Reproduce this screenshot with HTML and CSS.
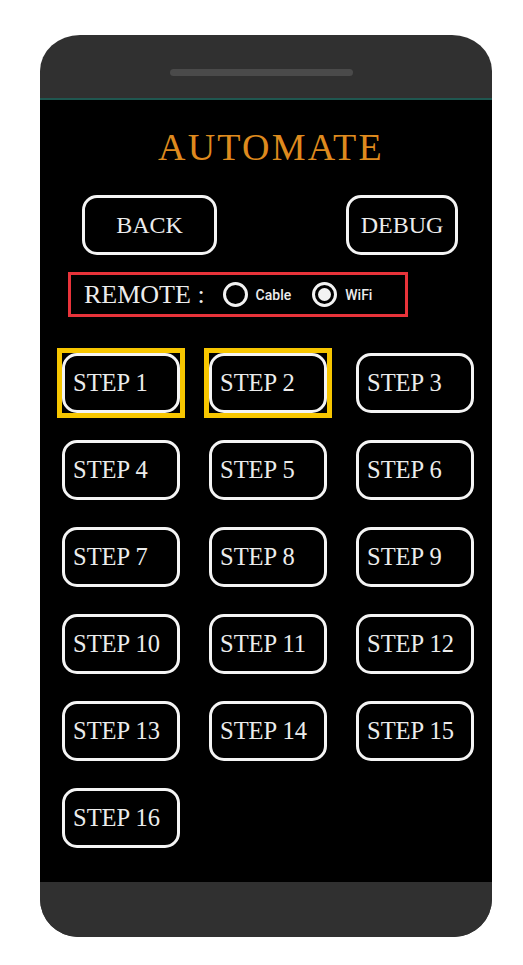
FILE: index.html
```
<!DOCTYPE html>
<html>
<head>
<meta charset="utf-8">
<link rel="stylesheet" href="styles.css">
</head>
<body>
<div class="phone">
  <div class="phone-top"><div class="speaker"></div></div>
  <div class="screen">
    <h1 class="title">AUTOMATE</h1>
    <div class="nav-row">
      <div class="btn btn-back">BACK</div>
      <div class="btn btn-debug">DEBUG</div>
    </div>
    <div class="remote">
      <span class="remote-label">REMOTE :</span>
      <span class="radio"></span><span class="radio-text">Cable</span>
      <span class="radio radio-on"><span class="dot"></span></span><span class="radio-text">WiFi</span>
    </div>
    <div class="steps">
      <div class="step selected">STEP 1</div>
      <div class="step selected">STEP 2</div>
      <div class="step">STEP 3</div>
      <div class="step">STEP 4</div>
      <div class="step">STEP 5</div>
      <div class="step">STEP 6</div>
      <div class="step">STEP 7</div>
      <div class="step">STEP 8</div>
      <div class="step">STEP 9</div>
      <div class="step">STEP 10</div>
      <div class="step">STEP 11</div>
      <div class="step">STEP 12</div>
      <div class="step">STEP 13</div>
      <div class="step">STEP 14</div>
      <div class="step">STEP 15</div>
      <div class="step">STEP 16</div>
    </div>
  </div>
  <div class="phone-bottom"></div>
</div>
</body>
</html>
```
FILE: styles.css
```
html, body {
  margin: 0;
  padding: 0;
  background: #ffffff;
}
body {
  font-family: "Liberation Serif", serif;
}
.phone {
  margin: 35px 0 0 40px;
  width: 452px;
  height: 902px;
  background: #303030;
  border-radius: 40px 40px 38px 38px / 36px 36px 38px 38px;
  overflow: hidden;
  display: flex;
  flex-direction: column;
}
.phone-top {
  height: 65px;
  border-bottom: 2px solid #1f5750;
  display: flex;
  justify-content: center;
  box-sizing: border-box;
  padding: 34px 9px 0 0;
  flex: none;
}
.speaker {
  width: 183px;
  height: 7px;
  background: #4a4a4a;
  border-radius: 4px;
}
.screen {
  background: #000;
  height: 782px;
  flex: none;
  box-sizing: border-box;
  padding-top: 29px;
  display: flex;
  flex-direction: column;
}
.phone-bottom {
  flex: 1;
  background: #303030;
}
.title {
  margin: 0 0 0 10px;
  font-weight: normal;
  font-size: 38px;
  line-height: 37px;
  height: 37px;
  letter-spacing: 2.2px;
  color: #de8a1e;
  text-align: center;
}
.nav-row {
  margin-top: 29px;
  display: flex;
  justify-content: space-between;
  padding: 0 34px 0 42px;
}
.btn {
  height: 60px;
  box-sizing: border-box;
  border: 3px solid #f4f4f4;
  border-radius: 15px;
  color: #ececec;
  font-size: 24px;
  display: flex;
  align-items: center;
  justify-content: center;
}
.btn-back { width: 135px; }
.btn-debug { width: 112px; }
.remote {
  margin: 17px 0 0 28px;
  width: 340px;
  height: 45px;
  box-sizing: border-box;
  border: 3px solid #e8333a;
  display: flex;
  align-items: center;
  padding-left: 13px;
}
.remote-label {
  color: #ececec;
  font-size: 26px;
  margin-right: 18px;
  white-space: pre;
}
.radio {
  width: 25px;
  height: 25px;
  box-sizing: border-box;
  border: 3px solid #f2f2f2;
  border-radius: 50%;
  display: flex;
  align-items: center;
  justify-content: center;
  flex: none;
}
.dot {
  width: 13px;
  height: 13px;
  background: #f2f2f2;
  border-radius: 50%;
}
.radio-text {
  font-family: Roboto, sans-serif;
  font-weight: 500;
  font-size: 14px;
  color: #ececec;
  margin-left: 8px;
  margin-right: 21px;
}
.steps {
  margin-top: 36px;
  padding-left: 22px;
  display: grid;
  grid-template-columns: repeat(3, 118px);
  grid-auto-rows: 60px;
  column-gap: 29px;
  row-gap: 27px;
}
.step {
  position: relative;
  box-sizing: border-box;
  border: 3px solid #f4f4f4;
  border-radius: 15px;
  color: #ececec;
  font-size: 24.5px;
  display: flex;
  align-items: center;
  padding-left: 8px;
  white-space: nowrap;
}
.step.selected::after {
  content: "";
  position: absolute;
  left: -8px;
  top: -8px;
  right: -8px;
  bottom: -8px;
  border: 5px solid #f7c600;
}
```
